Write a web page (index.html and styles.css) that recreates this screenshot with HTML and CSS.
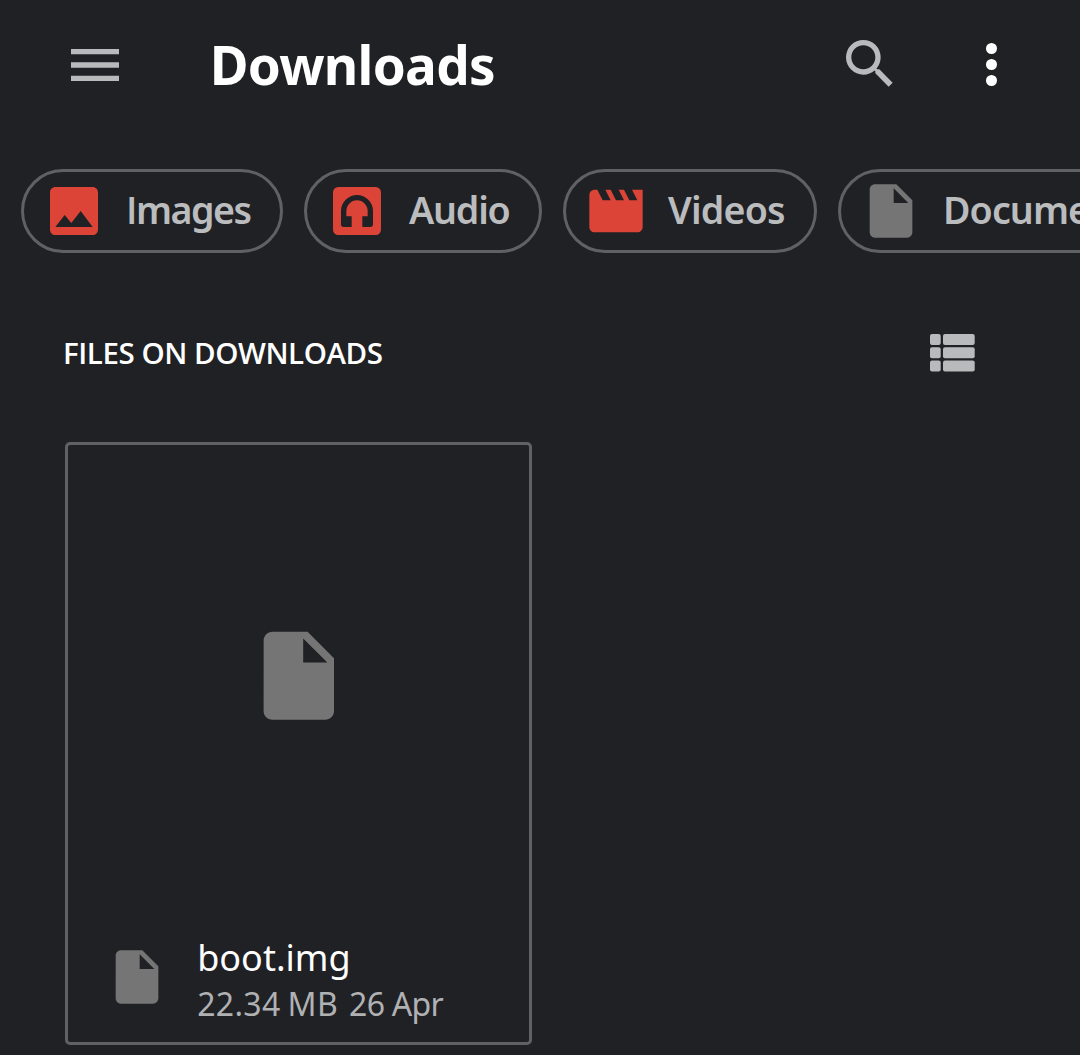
FILE: index.html
```html
<!DOCTYPE html>
<html lang="en">
<head>
<meta charset="utf-8">
<title>Downloads</title>
<link rel="stylesheet" href="styles.css">
</head>
<body>
<svg class="symbols" aria-hidden="true">
  <symbol id="file" viewBox="0 0 24 24"><path d="M6 2c-1.1 0-1.99.9-1.99 2L4 20c0 1.1.89 2 1.99 2H18c1.1 0 2-.9 2-2V8l-6-6H6zm7 7V3.5L18.5 9H13z"/></symbol>
</svg>
<header class="appbar">
  <svg class="icon menu" viewBox="0 0 24 24"><path d="M3 18h18v-2H3v2zm0-5h18v-2H3v2zm0-7v2h18V6H3z"/></svg>
  <h1 class="title">Downloads</h1>
  <svg class="icon search" viewBox="0 0 24 24"><path d="M15.5 14h-.79l-.28-.27A6.471 6.471 0 0 0 16 9.5 6.5 6.5 0 1 0 9.5 16c1.61 0 3.09-.59 4.23-1.57l.27.28v.79l5 4.99L20.49 19l-4.99-5zm-6 0C7.01 14 5 11.99 5 9.5S7.01 5 9.5 5 14 7.01 14 9.5 11.99 14 9.5 14z"/></svg>
  <svg class="more" viewBox="0 0 12 44"><circle cx="5.5" cy="5.5" r="5.5"/><circle cx="5.5" cy="21.5" r="5.5"/><circle cx="5.5" cy="37.5" r="5.5"/></svg>
</header>
<nav class="chips">
  <div class="chip chip-images">
    <svg class="icon red" viewBox="0 0 24 24"><path d="M21 19V5c0-1.1-.9-2-2-2H5c-1.1 0-2 .9-2 2v14c0 1.1.9 2 2 2h14c1.1 0 2-.9 2-2zM8.5 13.5l2.5 3.01L14.5 12l4.5 6H5l3.5-4.5z"/></svg>
    <span class="label"><span class="plain-cap">I</span>mages</span>
  </div>
  <div class="chip chip-audio">
    <svg class="icon red" viewBox="0 0 24 24"><path fill-rule="evenodd" d="M5 3h14a2 2 0 0 1 2 2v14a2 2 0 0 1-2 2H5a2 2 0 0 1-2-2V5a2 2 0 0 1 2-2zM12 6a6 6 0 0 0-6 6v5a1 1 0 0 0 1 1h3v-4H8v-2a4 4 0 0 1 8 0v2h-2v4h3a1 1 0 0 0 1-1v-5a6 6 0 0 0-6-6z"/></svg>
    <span class="label">Audio</span>
  </div>
  <div class="chip chip-videos">
    <svg class="icon red" viewBox="0 0 24 24"><path d="M18 4l2 4h-3l-2-4h-2l2 4h-3l-2-4H8l2 4H7L5 4H4c-1.1 0-1.99.9-1.99 2L2 18c0 1.1.9 2 2 2h16c1.1 0 2-.9 2-2V4h-4z"/></svg>
    <span class="label">Videos</span>
  </div>
  <div class="chip chip-documents">
    <svg class="icon gray"><use href="#file"/></svg>
    <span class="label">Documents</span>
  </div>
</nav>
<section class="section-head">
  <h2 class="section-title">FILES ON DOWNLOADS</h2>
  <svg class="list" viewBox="0 0 46 38"><rect x="1" y="0" width="10.7" height="11" rx="2"/><rect x="14" y="0" width="31.7" height="11" rx="2"/><rect x="1" y="13.2" width="10.7" height="11" rx="2"/><rect x="14" y="13.2" width="31.7" height="11" rx="2"/><rect x="1" y="26.4" width="10.7" height="11" rx="2"/><rect x="14" y="26.4" width="31.7" height="11" rx="2"/></svg>
</section>
<main class="grid">
  <article class="card">
    <div class="preview"><svg class="preview-icon gray"><use href="#file"/></svg></div>
    <div class="details">
      <svg class="icon gray"><use href="#file"/></svg>
      <div class="text">
        <div class="name">boot.img</div>
        <div class="meta"><span class="size">22.34 MB</span><span class="date">26 Apr</span></div>
      </div>
    </div>
  </article>
</main>
</body>
</html>
```
FILE: styles.css
```css
* { box-sizing: border-box; }
body {
  margin: 0;
  height: 1055px;
  overflow: hidden;
  background: #202125;
  color: #fff;
  font-family: "Noto Sans", sans-serif;
}
svg { display: block; flex: none; }
.symbols { width: 0; height: 0; position: absolute; }
.icon { width: 64px; height: 64px; fill: #b9babc; }
.red { fill: #dc4437; }
.gray { fill: #757575; }

.appbar {
  display: flex;
  align-items: center;
  height: 129px;
  padding-left: 62.7px;
}
.title {
  flex: 1;
  margin: 0;
  padding: 0 0 0 83px;
  font-size: 53px;
  font-weight: 700;
  line-height: 70px;
  letter-spacing: -.7px;
  white-space: nowrap;
}
.search { margin: 0 0 2px; }
.more { width: 12px; height: 44px; margin: 0 82.5px 0 84px; fill: #fff; }

.chips {
  display: flex;
  gap: 21px;
  margin-top: 40px;
  padding-left: 21px;
}
.chip {
  display: flex;
  flex: none;
  align-items: center;
  gap: 20px;
  height: 84px;
  padding-left: 18px;
  border: 3px solid #5f6165;
  border-radius: 42px;
}
.chip-images { width: 262px; letter-spacing: -1.5px; }
.chip-audio { width: 238px; letter-spacing: -1.2px; }
.chip-videos { width: 254px; letter-spacing: -.8px; }
.chip-documents { width: 340px; letter-spacing: -.9px; }
.label {
  color: #bbbcbe;
  font-size: 37.6px;
  font-weight: 600;
  line-height: 50px;
  padding-bottom: 3px;
}
.plain-cap { font-family: "Open Sans", sans-serif; }

.section-head {
  display: flex;
  justify-content: space-between;
  align-items: center;
  height: 100px;
  margin-top: 49px;
  padding: 0 105px 0 63px;
}
.section-title {
  margin: 0;
  padding-top: 2px;
  font-family: "Open Sans", sans-serif;
  font-size: 29.5px;
  font-weight: 650;
  line-height: 40px;
  letter-spacing: -.45px;
}
.list { width: 46px; height: 38px; margin-top: 1px; fill: #b9babc; }

.grid { display: flex; margin-top: 40px; padding-left: 65px; }
.card {
  width: 467px;
  height: 603px;
  border: 3px solid #5f6165;
  border-radius: 5px;
}
.preview {
  display: flex;
  justify-content: center;
  align-items: center;
  height: 461px;
}
.preview-icon { width: 105.6px; height: 105.6px; }
.details {
  display: flex;
  align-items: flex-start;
  padding-left: 36.7px;
}
.details .icon { margin-top: 38.5px; }
.text { padding: 28px 0 0 28.5px; }
.name { font-size: 36px; line-height: 48px; }
.meta { display: flex; gap: 11px; color: #b0b1b3; font-size: 32px; line-height: 44px; white-space: nowrap; }
.size { letter-spacing: .3px; word-spacing: -1.5px; }
.date { letter-spacing: -.7px; }
```
